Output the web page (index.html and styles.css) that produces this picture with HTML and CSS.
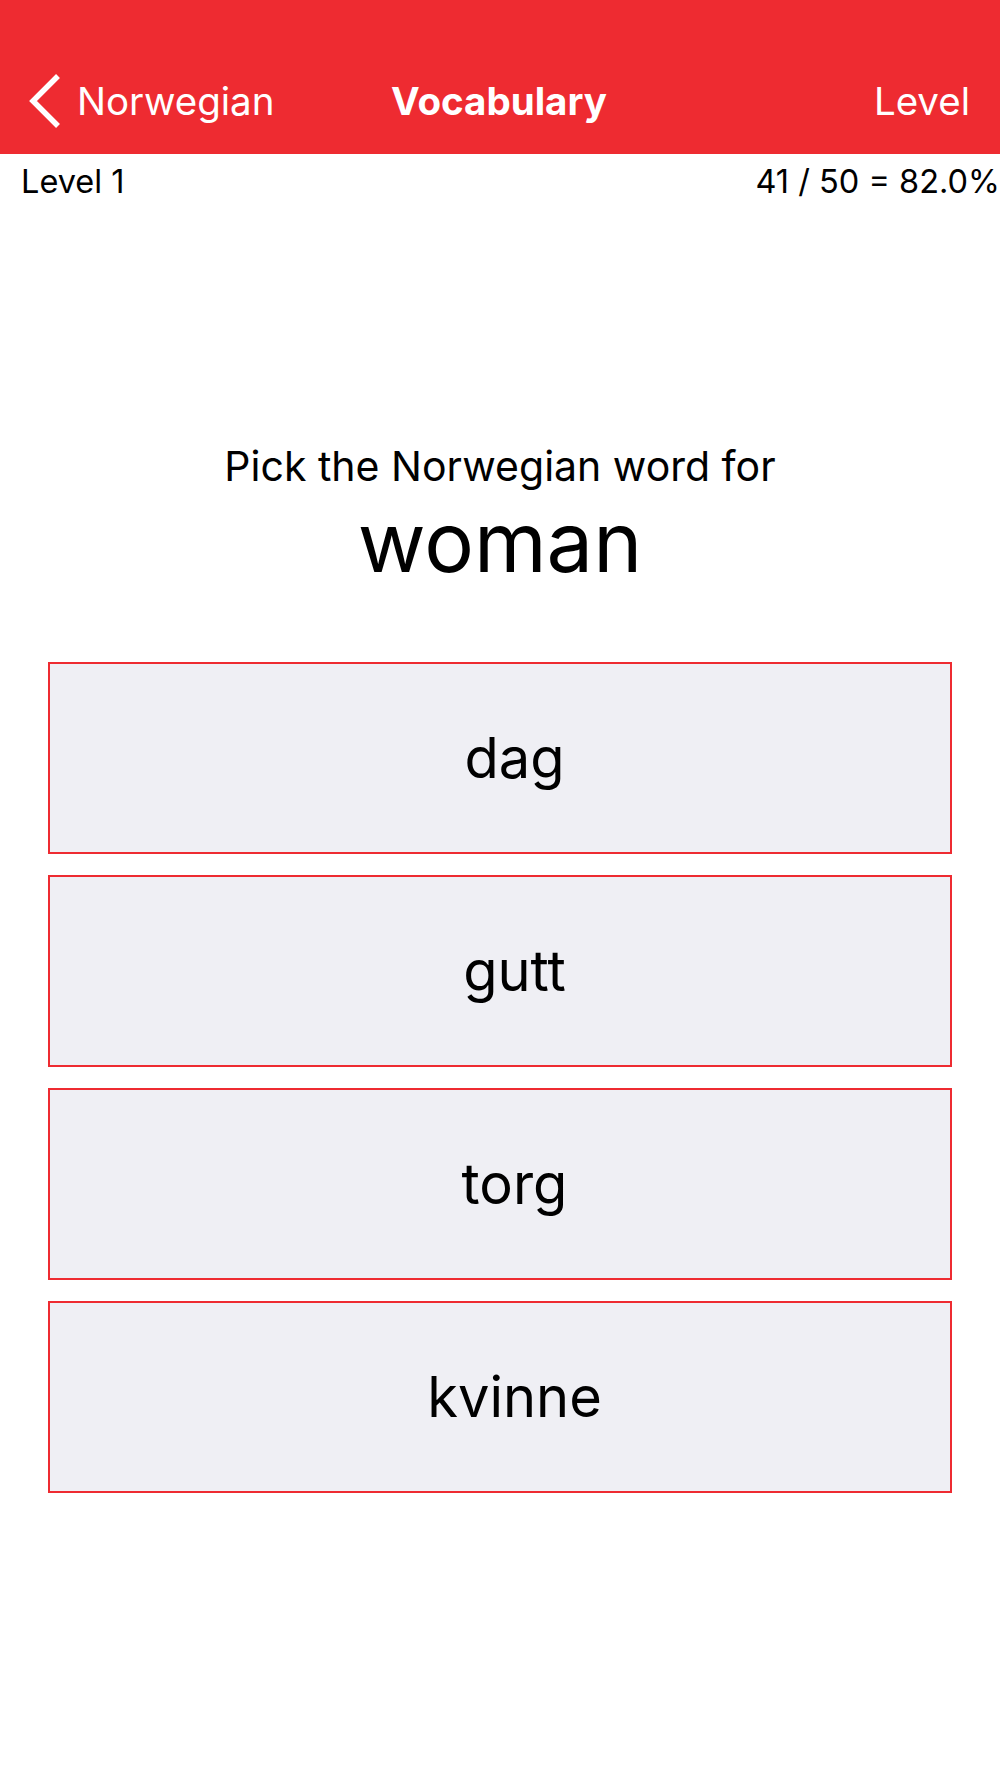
FILE: index.html
```html
<!DOCTYPE html>
<html lang="en">
<head>
  <meta charset="UTF-8">
  <meta name="viewport" content="width=device-width, initial-scale=1">
  <title>Vocabulary</title>
  <link rel="stylesheet" href="styles.css">
</head>
<body>

  <!-- Navigation Bar -->
  <header class="navbar">
    <a class="nav-back" href="#">
      <svg class="chevron" width="36" height="56" viewBox="0 0 36 56">
        <polyline points="30,3 5,28 30,53" fill="none" stroke="#fff" stroke-width="5.5" stroke-linecap="butt"/>
      </svg>
      <span>Norwegian</span>
    </a>
    <h1 class="nav-title">Vocabulary</h1>
    <a class="nav-right" href="#">Level</a>
  </header>

  <!-- Progress Row -->
  <div class="progress">
    <span>Level 1</span>
    <span>41 / 50 = 82.0%</span>
  </div>

  <!-- Question -->
  <main class="quiz">
    <div class="question">
      <p class="prompt">Pick the Norwegian word for</p>
      <p class="word">woman</p>
    </div>

    <div class="choices">
      <button type="button" class="choice">dag</button>
      <button type="button" class="choice">gutt</button>
      <button type="button" class="choice">torg</button>
      <button type="button" class="choice">kvinne</button>
    </div>
  </main>

</body>
</html>
```

FILE: styles.css
```css
body {
  margin: 0;
  font-family: Inter, "Noto Sans", sans-serif;
  background: #fff;
  color: #000;
}
.navbar {
  display: grid;
  grid-template-columns: 1fr auto 1fr;
  align-items: center;
  height: 154px;
  padding: 48px 30px 0 28px;
  box-sizing: border-box;
  background-color: #ee2b31;
  color: #fff;
}
.nav-back {
  display: flex;
  align-items: center;
  gap: 13px;
  color: #fff;
  text-decoration: none;
  font-size: 38.5px;
}
.nav-title {
  margin: 0;
  font-size: 38.5px;
  font-weight: 700;
}
.nav-right {
  justify-self: end;
  color: #fff;
  text-decoration: none;
  font-size: 38.5px;
}
.progress {
  display: flex;
  justify-content: space-between;
  padding: 4px 0 0 21px;
  font-size: 32.5px;
  line-height: 48px;
}
.quiz {
  padding: 0 48px;
}
.question {
  text-align: center;
  margin-top: 232px;
}
.prompt {
  margin: 0;
  font-size: 41px;
  line-height: 56px;
}
.word {
  margin: 0;
  font-size: 83px;
  line-height: 96px;
}
.choices {
  display: flex;
  flex-direction: column;
  gap: 21px;
  margin-top: 72px;
}
.choice {
  height: 192px;
  padding: 0 0 0 29px;
  border: 2px solid #ee2b31;
  background-color: #efeff4;
  font-family: inherit;
  font-size: 56px;
  color: #000;
  cursor: pointer;
}
```
